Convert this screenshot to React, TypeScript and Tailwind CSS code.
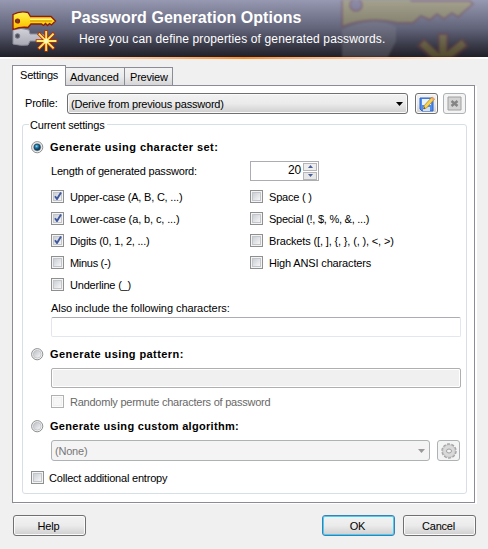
import type { ReactNode } from 'react';

function Keys({ className }: { className: string }) {
  return (
    <svg className={className} viewBox="0 0 48 44" fill="none">
      <defs>
        <linearGradient id="gold" x1="0" y1="0" x2="0" y2="1">
          <stop offset="0" stopColor="#fff35a" />
          <stop offset=".5" stopColor="#ffd91c" />
          <stop offset="1" stopColor="#f5b800" />
        </linearGradient>
        <linearGradient id="silver" x1="0" y1="0" x2="0" y2="1">
          <stop offset="0" stopColor="#d2d3da" />
          <stop offset="1" stopColor="#a7a8b3" />
        </linearGradient>
      </defs>
      <path d="M2 19q8-3 16 0l1 4h12l5 3-3 4H19l-2 4q-7 1-15-1Z" fill="url(#silver)" stroke="#8d8e99" />
      <circle cx="6.500" cy="25" r="2.300" fill="#4e505d" stroke="#777985" />
      <path d="M2 3.500Q9-.5 17 1.500l2.500 4H40l4.500 4.500-4 4-2-1.500-2 2-2-2-2 2-2-1.500H20l-3 3.500q-7-1-15 2Z" fill="url(#gold)" stroke="#8e1c08" strokeWidth="1.300" />
      <path d="M19 8.500h22" stroke="#fff79a" />
      <path d="M19 10h22" stroke="#c99200" />
      <circle cx="6.500" cy="10" r="2" fill="#74452e" stroke="#8e1c08" strokeWidth="1.200" />
      <g stroke="#b92e06" strokeWidth="3.600" strokeLinecap="square"><path d="M35.200 21v18M26.500 30h18M28.500 23.300l13.400 13.400M41.900 23.300l-13.400 13.400" /></g>
      <g stroke="#ffea68" strokeWidth="1.900" strokeLinecap="square"><path d="M35.200 21v18M26.500 30h18M28.500 23.300l13.400 13.400M41.900 23.300l-13.400 13.400" /></g>
      <circle cx="35.200" cy="30" r="2.300" fill="#fff8bd" />
    </svg>
  );
}

function Check({ checked, disabled, children, className = 'h-[22px] pt-[4px]', gap = 'gap-[6px]', tracking = '' }: {
  checked?: boolean; disabled?: boolean; children: ReactNode; className?: string; gap?: string; tracking?: string;
}) {
  return (
    <label className={`flex items-start ${gap} ${className} ${disabled ? 'text-[#686868]' : ''}`}>
      <span className={`flex size-[13px] shrink-0 border p-px ${disabled ? 'border-[#b1b1b1] bg-[#fbfbfb]' : 'border-[#8e8f8f] bg-[#f4f4f4]'}`}>
        <span className={`size-[9px] border ${disabled ? 'border-[#f0f0f0] bg-[#f6f6f6]' : 'border-[#c2c5ca] bg-linear-to-br from-[#cbcfd5] to-[#f6f6f6]'}`}>
          {checked && <svg className="-mt-px size-[8px]" viewBox="0 0 8 8"><path d="M1 4.200 3 7 7 .5" fill="none" stroke="#4058a0" strokeWidth="1.900" /></svg>}
        </span>
      </span>
      <span className={`pt-px leading-[13px] ${tracking}`}>{children}</span>
    </label>
  );
}

function Radio({ checked, className, children, tracking }: { checked?: boolean; className: string; children: ReactNode; tracking: string }) {
  return (
    <label className={`flex items-center gap-[6px] ${className}`}>
      <svg className="size-[13px] shrink-0" viewBox="0 0 13 13">
        <defs>
          <linearGradient id="radioFace" x1="0" y1="0" x2="1" y2="1"><stop stopColor="#b9bdc3" /><stop offset="1" stopColor="#fafafa" /></linearGradient>
          <radialGradient id="radioDot" cx=".4" cy=".35"><stop stopColor="#8fe0fa" /><stop offset=".45" stopColor="#2688b8" /><stop offset="1" stopColor="#12405f" /></radialGradient>
        </defs>
        <circle cx="6.200" cy="6.200" r="5.600" fill="#f4f4f4" stroke="#8e8f8f" />
        <circle cx="6.200" cy="6.200" r="3.900" fill="url(#radioFace)" stroke="#bcc0c5" strokeWidth=".8" />
        {checked && <circle cx="6.200" cy="6.200" r="3.200" fill="url(#radioDot)" stroke="#1c3d58" strokeWidth=".7" />}
      </svg>
      <span className={`font-bold ${tracking}`}>{children}</span>
    </label>
  );
}

function Button({ children, primary, className = '' }: { children: ReactNode; primary?: boolean; className?: string }) {
  return (
    <button className={`h-[21px] w-[73px] rounded-[3px] border bg-linear-to-b from-[#f2f2f2] from-0% via-[#ebebeb] via-50% to-[#cfcfcf] pr-[2px] ${primary ? 'border-[#3c7fb1] shadow-[inset_0_0_0_1px_#48cdf4]' : 'border-[#707070] shadow-[inset_0_0_0_1px_#fafafa]'} ${className}`}>
      {children}
    </button>
  );
}

function Tool({ children, disabled }: { children: ReactNode; disabled?: boolean }) {
  return (
    <button className={`flex h-[21px] w-[23px] items-center justify-center rounded-[3px] border ${disabled ? 'border-[#adb2b5] bg-[#f4f4f4]' : 'border-[#707070] bg-linear-to-b from-[#f2f2f2] via-[#ebebeb] to-[#cfcfcf] shadow-[inset_0_0_0_1px_#fafafa]'}`}>
      {children}
    </button>
  );
}

export default function App() {
  return (
    <div className="h-[549px] w-[488px] overflow-hidden bg-[#f0f0f0] font-['Liberation_Sans',Arial,sans-serif] text-[11px] leading-[14px] tracking-[-0.200px] text-black">
      <header className="relative flex h-[57px] overflow-hidden bg-linear-to-b from-[#9699b1] via-[#62647a] via-50% to-[#202029]">
        <svg className="absolute left-[340px] top-0 h-[57px] w-[148px] opacity-30 blur-[1px]" viewBox="0 0 148 57" fill="none">
          <path d="M2-5h62l8 6h58l3 3-15 13-6-4-8 6-7-5-7 6-9-4-8 7H58Q28 16 2 27Z" fill="#c6b844" stroke="#83413c" strokeWidth="2" />
          <circle cx="16" cy="5" r="6" fill="#807599" stroke="#83413c" strokeWidth="2" />
          <path d="M2 30q30-15 54-3v14l-8 16H2Z" fill="#888891" />
          <path d="M103 33v29M80 42l22 20M126 42 92 68" stroke="#873f38" strokeWidth="11" />
          <path d="M103 35v29M82 43l22 20M124 43 92 68" stroke="#c5ab35" strokeWidth="7" />
        </svg>
        <Keys className="ml-[11px] mt-[11px] h-[44px] w-[48px] shrink-0" />
        <div className="relative ml-[12px] whitespace-nowrap text-white">
          <h1 className="mt-[9px] text-[16px] font-bold leading-[18px] tracking-[0.040px]">Password Generation Options</h1>
          <p className="ml-[8px] mt-[4px] text-[12px] leading-[16px] tracking-[0.140px]">Here you can define properties of generated passwords.</p>
        </div>
      </header>
      <div className="h-[2px] bg-linear-to-r from-white via-[#ff8c1c] to-white" />
      <nav className="ml-[12px] mt-[6px] flex h-[21px] items-end">
        <div className="relative z-10 h-[21px] w-[54px] border border-b-0 border-[#8b8c95] bg-white pl-[7px] pt-[2px]">Settings</div>
        <div className="mb-px h-[18px] w-[59px] border border-b-0 border-l-0 border-[#8b8c95] bg-linear-to-b from-[#f3f3f3] via-[#ebebeb] to-[#d5d5d5] pl-[4px] pt-[2px] tracking-[0px]">Advanced</div>
        <div className="mb-px h-[18px] w-[48px] border border-b-0 border-l-0 border-[#8b8c95] bg-linear-to-b from-[#f3f3f3] via-[#ebebeb] to-[#d5d5d5] pl-[5px] pt-[2px]">Preview</div>
      </nav>
      <main className="-mt-px ml-[12px] h-[418px] w-[463px] border border-[#8b8c95] bg-white pl-[9px] pt-[7px] shadow-[2px_1px_0_white]">
        <div className="flex h-[21px] items-center">
          <span className="w-[45px] pb-px pl-[3px]">Profile:</span>
          <div className="flex h-[21px] w-[341px] items-center justify-between rounded-[3px] border border-[#707070] bg-linear-to-b from-[#f2f2f2] via-[#ebebeb] to-[#cfcfcf] pl-[3px] pr-[4px] shadow-[inset_0_0_0_1px_#fafafa]">
            <span>(Derive from previous password)</span>
            <svg className="h-[4px] w-[7px]" viewBox="0 0 7 4"><path d="M0 0h7L3.500 4Z" /></svg>
          </div>
          <div className="ml-[7px] flex gap-[5px]">
            <Tool>
              <svg className="size-[16px] shrink-0" viewBox="0 0 16 16">
                <path d="M1 2h13v13H3l-2-2Z" fill="#4d8df0" stroke="#2c62c8" />
                <path d="M3 3h9v6H3Z" fill="#e8f2ff" />
                <path d="M4 11h7v4H4Z" fill="#d3e1f5" />
                <path d="m4.500 13 .8-3.500L13 1l2.500 2-8 9Z" fill="#f9d448" stroke="#ad8030" strokeWidth=".8" />
                <path d="M12 2.200 13.300 1l2.200 2-1.200 1.400Z" fill="#f0a070" />
                <path d="m4.500 13 .5-2 1.300 1.300Z" fill="#333" />
              </svg>
            </Tool>
            <Tool disabled>
              <svg className="size-[15px] shrink-0" viewBox="0 0 15 15">
                <path d="M1 1h13v13H1Z" fill="#d3d3d3" stroke="#a0a0a0" />
                <path d="m4.500 5 6 5M10.500 5l-6 5" stroke="#858585" strokeWidth="2.500" />
              </svg>
            </Tool>
          </div>
        </div>
        <section className="relative mt-[10px] h-[370px] w-[445px] rounded-[3px] border border-[#d5dfe5] pl-[8px] pt-[13px]">
          <h2 className="absolute -top-[7px] left-[6px] bg-white pl-[1px] pr-[3px] leading-[14px]">Current settings</h2>
          <Radio checked className="h-[18px]" tracking="tracking-[0.450px]">Generate using character set:</Radio>
          <div className="flex h-[30px] items-center pl-[20px]">
            <span className="w-[199px] pb-px">Length of generated password:</span>
            <div className="flex h-[20px] w-[69px] items-center justify-end border border-[#abadb3] pr-px">
              <span className="pb-[2px] pr-[2px] text-[12px]">20</span>
              <span className="flex h-[17px] w-[14px] flex-col gap-px">
                <span className="flex flex-1 items-center justify-center border border-[#b5b5b8] bg-[#eeeeee]"><svg className="h-[3px] w-[5px]" viewBox="0 0 5 3"><path d="M0 3h5L2.500 0Z" fill="#4b5d9b" /></svg></span>
                <span className="flex flex-1 items-center justify-center border border-[#b5b5b8] bg-[#e7e7e7]"><svg className="h-[3px] w-[5px]" viewBox="0 0 5 3"><path d="M0 0h5L2.500 3Z" fill="#4b5d9b" /></svg></span>
              </span>
            </div>
          </div>
          <div className="flex pl-[20px]">
            <div className="w-[199px]">
              <Check checked>Upper-case (A, B, C, ...)</Check>
              <Check checked tracking="tracking-[-0.120px]">Lower-case (a, b, c, ...)</Check>
              <Check checked>Digits (0, 1, 2, ...)</Check>
              <Check tracking="tracking-[-0.300px]">Minus (-)</Check>
              <Check>Underline (_)</Check>
            </div>
            <div>
              <Check>Space ( )</Check>
              <Check tracking="tracking-[-0.250px]">Special (!, $, %, &amp;, ...)</Check>
              <Check tracking="tracking-[-0.150px]">Brackets ([, ], {'{'}, {'}'}, (, ), &lt;, &gt;)</Check>
              <Check tracking="tracking-[-0.150px]">High ANSI characters</Check>
            </div>
          </div>
          <div className="h-[21px] pl-[20px] pt-[5px] tracking-[-0.060px]">Also include the following characters:</div>
          <div className="ml-[20px] h-[20px] w-[410px] rounded-[2px] border border-[#e2e7ed] border-t-[#abadb3]" />
          <Radio className="h-[31px] pt-[3px]" tracking="tracking-[0.420px]">Generate using pattern:</Radio>
          <div className="ml-[20px] h-[20px] w-[410px] rounded-[2px] border border-[#afafaf] bg-[#f0f0f0] shadow-[inset_0_0_0_1px_white]" />
          <Check disabled className="h-[28px] pl-[20px] pt-[7px]" tracking="tracking-[-0.240px]">Randomly permute characters of password</Check>
          <Radio className="h-[20px]" tracking="tracking-[0.310px]">Generate using custom algorithm:</Radio>
          <div className="mt-[4px] flex gap-[7px] pl-[20px]">
            <div className="flex h-[21px] w-[379px] items-center justify-between rounded-[3px] border border-[#adb2b5] bg-[#f4f4f4] pl-[3px] pr-[4px] text-[#777777]">
              <span>(None)</span>
              <svg className="h-[4px] w-[7px]" viewBox="0 0 7 4"><path d="M0 0h7L3.500 4Z" fill="#9a9a9a" /></svg>
            </div>
            <Tool disabled>
              <svg className="size-[16px] shrink-0" viewBox="0 0 16 16">
                <circle cx="8" cy="8" r="6.700" fill="none" stroke="#a3a3a3" strokeWidth="2" strokeDasharray="2.900 1.310" />
                <circle cx="8" cy="8" r="6.300" fill="#d9d9d9" stroke="#b5b5b5" strokeWidth=".7" />
                <ellipse cx="8" cy="8" rx="2.500" ry="2" fill="#f4f4f4" stroke="#a0a0a0" />
              </svg>
            </Tool>
          </div>
          <Check className="pt-[10px]" gap="gap-[5px]">Collect additional entropy</Check>
        </section>
      </main>
      <footer className="mt-[12px] flex pl-[13px]">
        <Button>Help</Button>
        <Button primary className="ml-[236px]">OK</Button>
        <Button className="ml-[8px]">Cancel</Button>
      </footer>
    </div>
  );
}
